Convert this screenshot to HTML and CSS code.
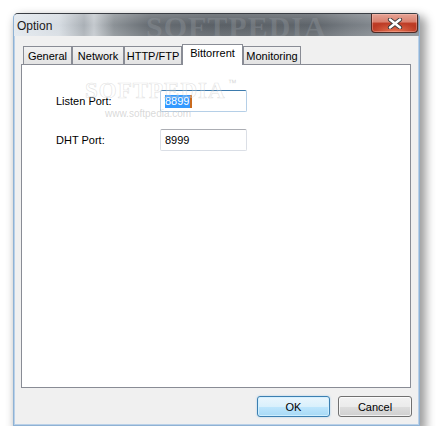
FILE: index.html
```html
<!DOCTYPE html>
<html>
<head>
<meta charset="utf-8">
<link rel="stylesheet" href="styles.css">
</head>
<body>
<div class="window">
  <div class="titlebar">
    <span class="title">Option</span>
    <span class="title-mark">SOFTPEDIA</span>
    <button class="close" aria-label="Close">
      <svg width="16" height="11" viewBox="0 0 16 11">
        <path d="M3 1.5 L13 9.5 M13 1.5 L3 9.5" stroke="#3a3a3a" stroke-width="4.2" stroke-linecap="round"/>
        <path d="M3 1.5 L13 9.5 M13 1.5 L3 9.5" stroke="#ffffff" stroke-width="2.4" stroke-linecap="round"/>
      </svg>
    </button>
  </div>
  <div class="client">
    <div class="tabs">
      <div class="tab t-general">General</div>
      <div class="tab t-network">Network</div>
      <div class="tab t-http">HTTP/FTP</div>
      <div class="tab t-bt active">Bittorrent</div>
      <div class="tab t-mon">Monitoring</div>
    </div>
    <div class="panel">
      <div class="row">
        <span class="label">Listen Port:</span>
        <div class="input focus"><span class="sel">8899</span><span class="caret"></span></div>
      </div>
      <div class="row">
        <span class="label">DHT Port:</span>
        <div class="input">8999</div>
      </div>
      <div class="mark"><span class="mark-big">SOFTPEDIA</span><span class="mark-tm">™</span></div>
      <div class="mark-url">www.softpedia.com</div>
    </div>
    <div class="buttons">
      <button class="btn default">OK</button>
      <button class="btn">Cancel</button>
    </div>
  </div>
</div>
</body>
</html>
```
FILE: styles.css
```css
html, body {
  margin: 0;
  padding: 0;
  background: #ffffff;
}
body {
  font-family: "Liberation Sans", Arial, sans-serif;
  font-size: 11px;
  color: #000;
}
.window {
  position: relative;
  box-sizing: border-box;
  margin: 13px 0 0 13px;
  width: 407px;
  height: 413px;
  border: 1px solid #8fb2d4;
  border-top-color: #3a3e44;
  border-radius: 5px 5px 0 0;
  padding: 0 1px 1px 1px;
  background: #b9d0e8;
  box-shadow: 4px 5px 10px 2px rgba(0, 0, 0, 0.38);
}
.titlebar {
  position: relative;
  height: 22px;
  margin: 0 -1px;
  padding: 0 1px 0 3px;
  display: flex;
  align-items: center;
  justify-content: space-between;
  overflow: hidden;
  border-radius: 4px 4px 0 0;
  background:
    linear-gradient(to bottom, rgba(255,255,255,0.18), rgba(255,255,255,0) 50%, rgba(255,255,255,0.12)),
    linear-gradient(to right, #e2e8ee 0, #d6dce2 45px, #aab0b6 70px, #c4c9ce 80px, #8b9196 100px, #666c72 135px, #5a6066 200px, #5e646a 300px, #757b81 335px, #868c92 370px, #8a9096 407px);
}
.title {
  position: relative;
  z-index: 1;
  font-size: 12px;
  color: #1a1a1a;
  margin-top: 2px;
}
.title-mark {
  position: absolute;
  left: 132px;
  top: -4px;
  font-family: "Liberation Serif", serif;
  font-weight: bold;
  font-size: 30px;
  letter-spacing: 1px;
  color: rgba(150, 156, 162, 0.35);
}
.close {
  position: relative;
  z-index: 1;
  width: 47px;
  height: 19px;
  margin-top: -3px;
  padding: 0;
  border: 1px solid #4e2a24;
  border-top: none;
  border-radius: 0 0 4px 4px;
  display: flex;
  align-items: center;
  justify-content: center;
  background:
    radial-gradient(ellipse 60% 50% at 50% 100%, rgba(255, 150, 110, 0.7), rgba(255, 150, 110, 0) 100%),
    linear-gradient(to bottom, #e6a395 0, #d9806e 45%, #bf3e28 50%, #b22e1a 100%);
  box-shadow: inset 0 0 0 1px rgba(255, 210, 200, 0.35);
}
.client {
  box-sizing: border-box;
  height: 388px;
  background: #f0f0f0;
  padding: 8px 6px 0 6px;
}
.tabs {
  display: flex;
  align-items: flex-end;
  height: 20px;
  padding-left: 2px;
  position: relative;
  z-index: 2;
}
.tab {
  box-sizing: border-box;
  height: 18px;
  border: 1px solid #898c95;
  border-bottom: none;
  background: linear-gradient(to bottom, #f2f2f2, #e3e3e3);
  text-align: center;
  line-height: 18px;
  color: #000;
}
.tab.active {
  height: 21px;
  margin-bottom: -1px;
  background: #ffffff;
  line-height: 16px;
}
.t-general { width: 49px; }
.t-network { width: 52px; }
.t-http { width: 58px; }
.t-bt { width: 61px; }
.t-mon { width: 58px; }
.panel {
  position: relative;
  box-sizing: border-box;
  width: 390px;
  height: 324px;
  background: #ffffff;
  border: 1px solid #898c95;
  padding: 25px 0 0 34px;
  display: flex;
  flex-direction: column;
  gap: 17px;
}
.row {
  display: flex;
  align-items: center;
}
.label {
  width: 104px;
}
.input {
  box-sizing: border-box;
  width: 87px;
  height: 22px;
  border: 1px solid #dbdfe6;
  border-top-color: #abadb3;
  border-radius: 2px;
  padding: 0 0 0 4px;
  display: flex;
  align-items: center;
  background: #ffffff;
}
.input.focus {
  border-color: #b5cfe7;
  border-top-color: #3d7bad;
}
.sel {
  background: #3399ff;
  color: #ffffff;
  line-height: 13px;
  padding: 0 1px 0 0;
}
.caret {
  width: 2px;
  height: 13px;
  background: #c96a1e;
}
.mark {
  position: absolute;
  left: 63px;
  top: 13px;
  pointer-events: none;
  color: rgba(220, 220, 220, 0.6);
}
.mark-big {
  font-family: "Liberation Serif", serif;
  font-weight: bold;
  font-size: 23px;
  letter-spacing: 1px;
  color: rgba(255, 255, 255, 0.2);
  -webkit-text-stroke: 0.6px rgba(200, 200, 200, 0.55);
}
.mark-tm {
  font-size: 9px;
  vertical-align: top;
  margin-left: 2px;
  color: rgba(190, 190, 190, 0.6);
}
.mark-url {
  position: absolute;
  left: 83px;
  top: 43px;
  font-size: 10px;
  color: rgba(185, 185, 185, 0.55);
  pointer-events: none;
}
.buttons {
  display: flex;
  justify-content: flex-end;
  gap: 8px;
  margin-top: 8px;
  padding-right: 0;
}
.btn {
  box-sizing: border-box;
  width: 74px;
  height: 21px;
  font-family: "Liberation Sans", Arial, sans-serif;
  font-size: 11px;
  color: #000;
  border: 1px solid #707070;
  border-radius: 3px;
  padding: 0;
  background: linear-gradient(to bottom, #f2f2f2 0, #ebebeb 50%, #dddddd 51%, #cfcfcf 100%);
  box-shadow: inset 0 0 0 1px rgba(255, 255, 255, 0.7);
}
.btn.default {
  width: 73px;
  border-color: #3c7fb1;
  background: linear-gradient(to bottom, #eaf6fd 0, #d9f0fc 50%, #bee6fd 51%, #a7d9f5 100%);
  box-shadow: inset 0 0 0 1px rgba(210, 240, 255, 0.9), 0 0 2px rgba(80, 170, 230, 0.5);
}
```
